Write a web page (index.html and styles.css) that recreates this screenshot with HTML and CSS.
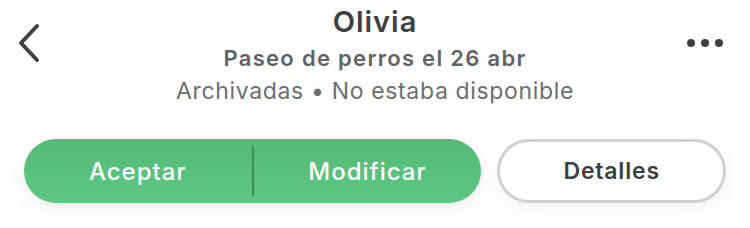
FILE: index.html
```html
<!DOCTYPE html>
<html lang="es">
<head>
<meta charset="utf-8">
<link rel="stylesheet" href="styles.css">
</head>
<body>
<div class="screen">
  <header class="header">
    <button class="icon-btn back" aria-label="Atrás">
      <svg width="26" height="40" viewBox="0 0 26 40"><path d="M21 3 L5 20 L21 37" fill="none" stroke="#3c4043" stroke-width="4" stroke-linecap="round" stroke-linejoin="round"/></svg>
    </button>
    <div class="titles">
      <div class="name">Olivia</div>
      <div class="service">Paseo de perros el 26 abr</div>
      <div class="status">Archivadas • No estaba disponible</div>
    </div>
    <button class="icon-btn more" aria-label="Más">
      <svg width="40" height="10" viewBox="0 0 40 10"><circle cx="5" cy="5" r="4" fill="#3c4043"/><circle cx="19" cy="5" r="4" fill="#3c4043"/><circle cx="33" cy="5" r="4" fill="#3c4043"/></svg>
    </button>
  </header>
  <div class="actions">
    <div class="pill-group">
      <button class="pill-half">Aceptar</button>
      <span class="divider"></span>
      <button class="pill-half">Modificar</button>
    </div>
    <button class="outline-pill">Detalles</button>
  </div>
</div>
</body>
</html>
```
FILE: styles.css
```css
* { box-sizing: border-box; }
html, body { margin: 0; padding: 0; background: #ffffff; }
body { font-family: Inter, "Noto Sans", sans-serif; color: #3c4043; width: 750px; height: 228px; overflow: hidden; }
.screen { display: flex; flex-direction: column; }
.header { display: flex; align-items: flex-start; height: 122px; padding: 0 24px 0 16px; background: linear-gradient(#ffffff 88%, #fcfcfc); }
.icon-btn { background: none; border: 0; padding: 0; display: flex; }
.back { margin-top: 23px; width: 52px; }
.more { margin-top: 38px; width: 44px; justify-content: flex-end; }
.titles { flex: 1; text-align: center; display: flex; flex-direction: column; align-items: center; }
.name { font-size: 29px; font-weight: 600; line-height: 36px; margin-top: 4px; letter-spacing: 1px; color: #3c4043; }
.service { font-size: 22px; font-weight: 600; line-height: 33px; margin-top: 2px; letter-spacing: 1.3px; color: #5f6368; }
.status { font-size: 23px; font-weight: 400; line-height: 34px; margin-top: -1px; letter-spacing: 0.65px; color: #6a6e73; }
.actions { display: grid; grid-template-columns: 2fr 1fr; gap: 16px; padding: 17px 24px 0; }
.pill-group { display: flex; align-items: center; height: 64px; border-radius: 32px; background: linear-gradient(#55b977, #5dc882); box-shadow: 0 6px 18px rgba(0,0,0,0.07); }
.pill-half { flex: 1 1 0; background: none; border: 0; color: #ffffff; font-family: Inter, sans-serif; font-size: 24px; font-weight: 500; letter-spacing: 1px; height: 100%; padding: 0; }
.divider { width: 2px; height: 50px; background: #3f8a58; }
.outline-pill { height: 64px; padding: 0; border-radius: 32px; border: 3px solid #cdd0d4; background: #ffffff; color: #3c4043; font-family: Inter, sans-serif; font-size: 23px; font-weight: 600; letter-spacing: 0.8px; box-shadow: 0 6px 18px rgba(0,0,0,0.05); }
```
